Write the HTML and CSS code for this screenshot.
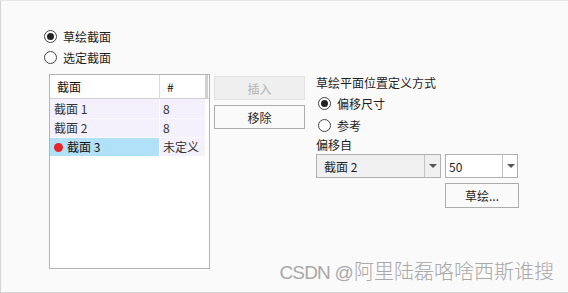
FILE: index.html
```html
<!DOCTYPE html>
<html>
<head>
<meta charset="utf-8">
<link rel="stylesheet" href="styles.css">
</head>
<body>
<div class="dialog">
  <div class="top-radios">
    <div class="radio-row"><span class="radio checked"></span><span class="lbl">草绘截面</span></div>
    <div class="radio-row"><span class="radio"></span><span class="lbl">选定截面</span></div>
  </div>
  <div class="main">
    <div class="list">
      <div class="list-head">
        <div class="c1">截面</div>
        <div class="c2">#</div>
        <div class="c3"></div>
      </div>
      <div class="list-row"><div class="c1">截面 1</div><div class="c2">8</div></div>
      <div class="list-row"><div class="c1">截面 2</div><div class="c2">8</div></div>
      <div class="list-row sel"><div class="c1"><span class="dot"></span>截面 3</div><div class="c2">未定义</div></div>
    </div>
    <div class="btn-col">
      <div class="btn disabled">插入</div>
      <div class="btn">移除</div>
    </div>
    <div class="right">
      <div class="caption">草绘平面位置定义方式</div>
      <div class="radio-row r2"><span class="radio checked"></span><span class="lbl">偏移尺寸</span></div>
      <div class="radio-row r2"><span class="radio"></span><span class="lbl">参考</span></div>
      <div class="caption c-off">偏移自</div>
      <div class="combos">
        <div class="combo gray"><span class="val">截面 2</span><span class="arrow"></span></div>
        <div class="combo white small"><span class="val">50</span><span class="arrow"></span></div>
      </div>
      <div class="btn-row"><div class="btn sketch">草绘...</div></div>
    </div>
  </div>
  <div class="watermark"><span class="wm-latin">CSDN @</span><span class="wm-cjk">阿里陆磊咯啥西斯谁搜</span></div>
</div>
</body>
</html>
```
FILE: styles.css
```css
html, body { margin: 0; padding: 0; }
body { width: 568px; height: 293px; overflow: hidden; }
.dialog {
  position: relative;
  box-sizing: border-box;
  width: 568px; height: 293px;
  background: #fafafa;
  border-left: 1px solid #d4d4d4;
  border-top: 1px solid #e6e6e6;
  border-bottom: 1px solid #d4d4d4;
  font-family: "Noto Sans CJK SC", "Noto Sans", sans-serif;
  font-size: 12px;
  color: #1e1e1e;
  padding-top: 25px;
  padding-left: 43px;
}
.top-radios { display: flex; flex-direction: column; }
.radio-row { display: flex; align-items: center; height: 21px; }
.radio {
  box-sizing: border-box;
  width: 13px; height: 13px;
  border: 1px solid #444;
  border-radius: 50%;
  background: #fff;
  display: flex; align-items: center; justify-content: center;
  flex: none;
}
.radio.checked::after {
  content: "";
  width: 7px; height: 7px; border-radius: 50%; background: #222;
}
.lbl { margin-left: 6px; line-height: 21px; }
.main { display: flex; margin-top: 6px; margin-left: 5px; }
.list {
  box-sizing: border-box;
  width: 161px; height: 195px;
  border: 1px solid #b4b4b4;
  background: #fff;
  display: flex; flex-direction: column;
}
.list-head {
  display: flex; height: 23px;
  border-bottom: 1px solid #cfcfcf;
  line-height: 23px; color: #111;
}
.list-head .c1 { width: 110px; padding-left: 7px; box-sizing: border-box; border-right: 1px solid #dadada; }
.list-head .c2 { width: 45px; padding-left: 7px; box-sizing: border-box; }
.list-head .c3 { width: 3px; background: #d0d0d0; }
.list-row {
  display: flex; height: 19px; line-height: 19px;
  width: 156px;
  color: #333;
}
.list-row + .list-row { border-top: 1px solid #fbfaff; height: 18px; line-height: 18px; }
.list-row .c1 { width: 110px; padding-left: 4px; box-sizing: border-box; background: #f4f1fd; border-right: 1px solid #fff; display: flex; align-items: center; }
.list-row .c2 { width: 45px; padding-left: 3px; box-sizing: border-box; background: #f4f1fd; }
.list-row.sel .c1 { background: #b1e1f9; color: #111; }
.dot { width: 9px; height: 9px; border-radius: 50%; background: #e8262b; margin-right: 4px; }
.btn-col { display: flex; flex-direction: column; margin-left: 4px; margin-top: 2px; gap: 5px; }
.btn {
  box-sizing: border-box;
  width: 91px; height: 24px;
  border: 1px solid #adadad;
  background: #fafafa;
  display: flex; align-items: center; justify-content: center;
  color: #1e1e1e;
}
.btn.disabled { background: #efefef; border-color: #e2e2e2; color: #b3b3b3; }
.right { margin-left: 11px; display: flex; flex-direction: column; width: 203px; }
.caption { height: 18px; line-height: 18px; }
.r2 { height: 22px; padding-left: 2px; }
.r2 .lbl { margin-left: 6px; }
.c-off { height: 18px; }
.combos { display: flex; gap: 4px; }
.combo {
  box-sizing: border-box; height: 24px;
  border: 1px solid #b0b0b0;
  display: flex; align-items: center;
}
.combo.gray { width: 125px; background: #f0f0f0; }
.combo.white { width: 73px; background: #fff; }
.combo .val { flex: 1; padding-left: 7px; }
.combo.small .val { padding-left: 3px; }
.arrow {
  box-sizing: border-box;
  width: 16px; height: 22px;
  border-left: 1px solid #c4c4c4;
  position: relative;
}
.combo.small .arrow { width: 15px; }
.arrow::after {
  content: "";
  position: absolute; left: 4px; top: 9px;
  border-left: 4px solid transparent;
  border-right: 4px solid transparent;
  border-top: 4px solid #555;
}
.btn-row { display: flex; justify-content: flex-end; margin-top: 5px; }
.btn.sketch { width: 74px; height: 25px; }
.watermark {
  position: absolute; right: 14px; bottom: 5px;
  color: #a8a8a8;
  white-space: nowrap;
  line-height: 26px;
}
.wm-latin {
  font-family: "Liberation Sans", sans-serif;
  font-size: 19px;
  letter-spacing: -0.8px;
  margin-right: 1px;
}
.wm-cjk {
  font-family: "Noto Sans CJK SC", sans-serif;
  font-size: 20px;
  font-weight: 300;
}
```
